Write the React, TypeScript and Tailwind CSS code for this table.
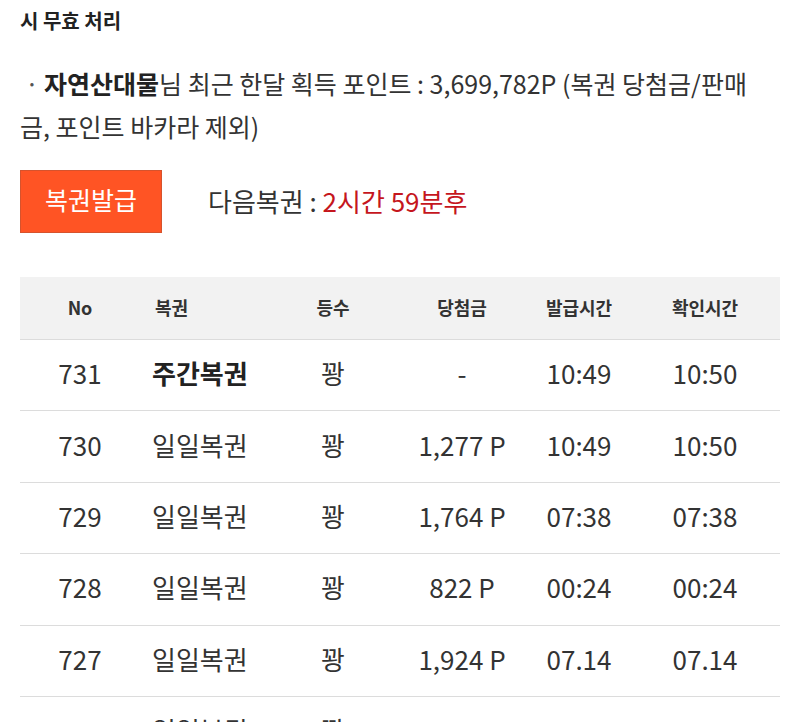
import React from "react";

const rows = [
  { no: "731", name: "주간복권", bold: true, rank: "꽝", prize: "-", issued: "10:49", checked: "10:50" },
  { no: "730", name: "일일복권", rank: "꽝", prize: "1,277 P", issued: "10:49", checked: "10:50" },
  { no: "729", name: "일일복권", rank: "꽝", prize: "1,764 P", issued: "07:38", checked: "07:38" },
  { no: "728", name: "일일복권", rank: "꽝", prize: "822 P", issued: "00:24", checked: "00:24" },
  { no: "727", name: "일일복권", rank: "꽝", prize: "1,924 P", issued: "07.14", checked: "07.14" },
  { no: "726", name: "일일복권", rank: "꽝", prize: "1,102 P", issued: "07.13", checked: "07.13" },
];

const grid = "grid grid-cols-[120px_130px_126px_132px_102px_150px] items-center";

export default function App() {
  return (
    <div
      className="w-[800px] h-[722px] overflow-hidden bg-white px-[20px] text-[#333]"
      style={{ fontFamily: '"Noto Sans CJK KR", "Noto Sans", sans-serif' }}
    >
      <div className="pt-[7px] text-[20px] font-bold leading-[28px] text-[#222]">시 무효 처리</div>

      <p className="mt-[27px] text-[25px] leading-[43px] text-[#333]">
        <span className="whitespace-nowrap">
          <span className="ml-[5px] mr-[5px] text-[#555]">·</span>
          <b className="font-bold text-[#222]">자연산대물</b>님 최근 한달 획득 포인트 : 3,699,782P (복권 당첨금/판매
        </span>
        <br />
        금, 포인트 바카라 제외)
      </p>

      <div className="mt-[22px] flex items-center">
        <button className="flex h-[63px] w-[142px] items-center justify-center border border-[#d6532d] bg-[#ff5424] pb-[3px] text-[25px] text-white">
          복권발급
        </button>
        <div className="ml-[46px] pb-[3px] text-[26px] text-[#333]">
          다음복권 : <span className="text-[#c5161d]">2시간 59분후</span>
        </div>
      </div>

      <div className="mt-[44px] w-[760px]">
        <div className={`${grid} h-[63px] border-b border-[#dcdcdc] bg-[#f2f2f2] pb-[2px] text-[18px] font-bold text-[#333]`}>
          <div className="text-center">No</div>
          <div className="pl-[15px]">복권</div>
          <div className="text-center">등수</div>
          <div className="text-center">당첨금</div>
          <div className="text-center">발급시간</div>
          <div className="text-center">확인시간</div>
        </div>
        {rows.map((r) => (
          <div key={r.no} className={`${grid} h-[71.4px] border-b border-[#dcdcdc] pb-[5px] text-[26px] text-[#333]`}>
            <div className="text-center">{r.no}</div>
            <div className={`pl-[12px] ${r.bold ? "font-bold text-[#222]" : ""}`}>{r.name}</div>
            <div className="text-center">{r.rank}</div>
            <div className="text-center">{r.prize}</div>
            <div className="text-center">{r.issued}</div>
            <div className="text-center">{r.checked}</div>
          </div>
        ))}
      </div>
    </div>
  );
}
